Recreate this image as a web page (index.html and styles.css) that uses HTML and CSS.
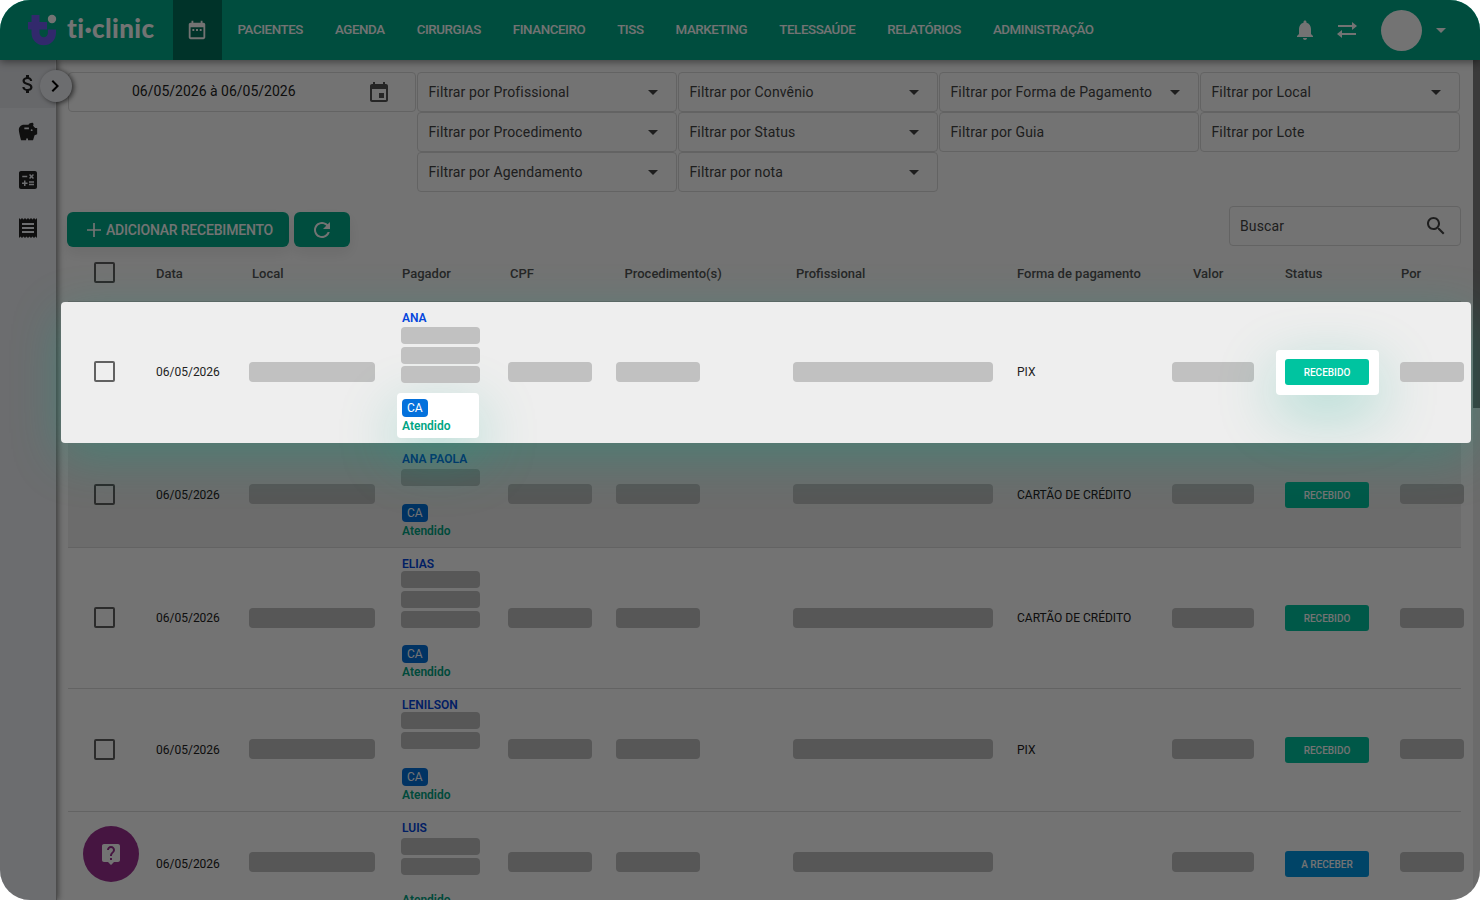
FILE: index.html
```
<!DOCTYPE html>
<html lang="pt-BR">
<head>
    <meta charset="UTF-8">
    <meta name="viewport" content="width=device-width, initial-scale=1.0">
    <title>ti-clinic - Recebimentos</title>
    <link rel="stylesheet" href="styles.css">
</head>
<body>
    <div class="app">
        <header class="topbar">
            <div class="logo">
                <svg class="logo-mark" viewBox="0 0 30 32">
                    <path fill="#6f5bf0" d="M4.500 1h8v7H20v7.500h-7.500V19a4.200 4.200 0 0 0 8.400 0v-3.500H29V19a12.250 12.250 0 0 1-24.500 0v-3.500H1V8h3.500z"/>
                    <circle cx="25" cy="5" r="4.200" fill="#fff"/>
                </svg>
                <span class="logo-text">ti·clinic</span>
            </div>
            <a class="nav-icon active">
                <svg class="icon-22" viewBox="0 0 24 24"><path d="M9 11H7v2h2v-2zm4 0h-2v2h2v-2zm4 0h-2v2h2v-2zm2-7h-1V2h-2v2H8V2H6v2H5c-1.110 0-1.990.9-1.990 2L3 20c0 1.100.89 2 2 2h14c1.100 0 2-.9 2-2V6c0-1.100-.9-2-2-2zm0 16H5V9h14v11z"/></svg>
            </a>
            <nav class="menu">
                <a>PACIENTES</a>
                <a>AGENDA</a>
                <a>CIRURGIAS</a>
                <a>FINANCEIRO</a>
                <a>TISS</a>
                <a>MARKETING</a>
                <a>TELESSAÚDE</a>
                <a>RELATÓRIOS</a>
                <a>ADMINISTRAÇÃO</a>
            </nav>
            <div class="user-area">
                <svg class="icon" viewBox="0 0 24 24"><path d="M12 22c1.100 0 2-.9 2-2h-4c0 1.100.89 2 2 2zm6-6v-5c0-3.070-1.640-5.640-4.500-6.320V4c0-.83-.67-1.500-1.500-1.500s-1.500.67-1.500 1.500v.68C7.630 5.360 6 7.920 6 11v5l-2 2v1h16v-1l-2-2z"/></svg>
                <svg class="swap" viewBox="0 0 20 16"><path d="M1 3h14V0l5 4-5 4V5H1zM19 11H5V8l-5 4 5 4v-3h14z"/></svg>
                <span class="avatar"></span>
                <span class="caret"></span>
            </div>
        </header>

        <div class="body">
            <aside class="sidebar">
                <a class="side-item active"><svg class="icon" viewBox="0 0 24 24"><path d="M11.800 10.900c-2.270-.59-3-1.200-3-2.150 0-1.090 1.010-1.850 2.700-1.850 1.780 0 2.440.85 2.500 2.100h2.210c-.07-1.720-1.120-3.300-3.210-3.810V3h-3v2.160c-1.940.42-3.500 1.680-3.500 3.610 0 2.310 1.910 3.460 4.700 4.130 2.500.6 3 1.480 3 2.410 0 .69-.49 1.790-2.700 1.790-2.060 0-2.870-.92-2.980-2.100h-2.200c.12 2.190 1.760 3.420 3.680 3.830V21h3v-2.150c1.950-.37 3.500-1.500 3.500-3.550 0-2.840-2.430-3.810-4.700-4.400z"/></svg></a>
                <a class="side-item"><svg class="icon-22" viewBox="0 0 24 24"><path fill-rule="evenodd" d="M19.830 7.500l-2.270-2.270c.07-.42.18-.81.32-1.150.08-.18.12-.37.12-.58C18 2.670 17.330 2 16.500 2c-1.640 0-3.090.79-4 2h-5C4.460 4 2 6.460 2 9.500S4.500 21 4.500 21H10v-2h2v2h5.500l1.680-5.590 2.820-.94V7.500h-2.170zM13 9H8V7h5v2zm3 2a1 1 0 1 1 0-2 1 1 0 0 1 0 2z"/></svg></a>
                <a class="side-item"><svg class="icon-24" viewBox="0 0 24 24"><path d="M19 3H5c-1.100 0-2 .9-2 2v14c0 1.100.9 2 2 2h14c1.100 0 2-.9 2-2V5c0-1.100-.9-2-2-2zm-5.970 4.060L14.090 6l1.410 1.410L16.910 6l1.060 1.060-1.410 1.410 1.410 1.410-1.060 1.060-1.410-1.400-1.410 1.410-1.060-1.060 1.410-1.410-1.410-1.420zM6.250 7.720h5v1.500h-5v-1.500zM11.500 16h-2v2H8v-2H6v-1.500h2v-2h1.500v2h2V16zm6.500 1.250h-5v-1.500h5v1.500zm0-2.500h-5v-1.500h5v1.500z"/></svg></a>
                <a class="side-item"><svg class="icon-24" viewBox="0 0 24 24"><path d="M18 17H6v-2h12v2zm0-4H6v-2h12v2zm0-4H6V7h12v2zM3 22l1.500-1.500L6 22l1.500-1.500L9 22l1.500-1.500L12 22l1.500-1.500L15 22l1.500-1.500L18 22l1.500-1.500L21 22V2l-1.500 1.500L18 2l-1.500 1.500L15 2l-1.500 1.500L12 2l-1.500 1.500L9 2 7.500 3.500 6 2 4.500 3.500 3 2v20z"/></svg></a>
                <button class="side-toggle"><svg class="icon-24" viewBox="0 0 24 24"><path d="M10 6L8.590 7.410 13.170 12l-4.580 4.590L10 18l6-6z"/></svg></button>
            </aside>

            <main class="content">
                <div class="filters">
                    <div class="field date-field">
                        <span>06/05/2026 à 06/05/2026</span>
                        <svg class="icon" viewBox="0 0 24 24"><path d="M17 12h-5v5h5v-5zM16 1v2H8V1H6v2H5c-1.110 0-1.990.9-1.990 2L3 19c0 1.100.89 2 2 2h14c1.100 0 2-.9 2-2V5c0-1.100-.9-2-2-2h-1V1h-2zm3 18H5V8h14v11z"/></svg>
                    </div>
                    <div class="field">Filtrar por Profissional<span class="caret"></span></div>
                    <div class="field">Filtrar por Convênio<span class="caret"></span></div>
                    <div class="field">Filtrar por Forma de Pagamento<span class="caret"></span></div>
                    <div class="field">Filtrar por Local<span class="caret"></span></div>
                    <div class="field second-line">Filtrar por Procedimento<span class="caret"></span></div>
                    <div class="field">Filtrar por Status<span class="caret"></span></div>
                    <div class="field">Filtrar por Guia</div>
                    <div class="field">Filtrar por Lote</div>
                    <div class="field second-line">Filtrar por Agendamento<span class="caret"></span></div>
                    <div class="field">Filtrar por nota<span class="caret"></span></div>
                </div>

                <div class="toolbar">
                    <button class="btn btn-add">
                        <svg class="icon" viewBox="0 0 24 24"><path d="M19 12.850h-6.150V19h-1.700v-6.150H5v-1.700h6.150V5h1.700v6.150H19z"/></svg>
                        ADICIONAR RECEBIMENTO
                    </button>
                    <button class="btn btn-refresh">
                        <svg class="icon" viewBox="0 0 24 24"><path d="M17.650 6.350C16.200 4.900 14.210 4 12 4c-4.420 0-7.990 3.580-7.990 8s3.570 8 7.990 8c3.730 0 6.840-2.550 7.730-6h-2.080c-.82 2.330-3.040 4-5.650 4-3.310 0-6-2.690-6-6s2.690-6 6-6c1.660 0 3.140.69 4.220 1.780L13 11h7V4l-2.350 2.350z"/></svg>
                    </button>
                    <div class="field search">
                        Buscar
                        <svg class="icon" viewBox="0 0 24 24"><path d="M15.500 14h-.79l-.28-.27C15.410 12.590 16 11.110 16 9.500 16 5.910 13.090 3 9.500 3S3 5.910 3 9.500 5.910 16 9.500 16c1.610 0 3.090-.59 4.230-1.570l.27.28v.79l5 4.990L20.490 19l-4.990-5zm-6 0C7.010 14 5 11.990 5 9.500S7.010 5 9.500 5 14 7.010 14 9.500 11.990 14 9.500 14z"/></svg>
                    </div>
                </div>

                <div class="table">
                    <div class="row head">
                        <div><span class="checkbox"></span></div>
                        <div>Data</div>
                        <div class="th-local">Local</div>
                        <div class="th-pagador">Pagador</div>
                        <div class="th-cpf">CPF</div>
                        <div class="th-proc">Procedimento(s)</div>
                        <div class="th-prof">Profissional</div>
                        <div>Forma de pagamento</div>
                        <div class="th-valor">Valor</div>
                        <div>Status</div>
                        <div class="th-por">Por</div>
                    </div>

                    <div class="row spotlight">
                        <div><span class="checkbox"></span></div>
                        <div>06/05/2026</div>
                        <div><span class="mask mask-local"></span></div>
                        <div class="payer">
                            <a class="name">ANA</a>
                            <div class="masks lines-4 tight"><span></span><span></span><span></span></div>
                            <div class="payer-status focus-box">
                                <div class="tag-line"><span class="tag">CA</span></div>
                                <div class="attended">Atendido</div>
                            </div>
                        </div>
                        <div><span class="mask mask-cpf"></span></div>
                        <div><span class="mask mask-cpf"></span></div>
                        <div><span class="mask mask-prof"></span></div>
                        <div>PIX</div>
                        <div><span class="mask mask-valor"></span></div>
                        <div><div class="focus-box status-focus"><span class="status">RECEBIDO</span></div></div>
                        <div><span class="mask mask-por"></span></div>
                    </div>

                    <div class="row hovered">
                        <div><span class="checkbox"></span></div>
                        <div>06/05/2026</div>
                        <div><span class="mask mask-local"></span></div>
                        <div class="payer">
                            <a class="name">ANA PAOLA</a>
                            <div class="masks lines-2 lower"><span></span></div>
                            <div class="tag-line"><span class="tag">CA</span></div>
                            <div class="attended">Atendido</div>
                        </div>
                        <div><span class="mask mask-cpf"></span></div>
                        <div><span class="mask mask-cpf"></span></div>
                        <div><span class="mask mask-prof"></span></div>
                        <div>CARTÃO DE CRÉDITO</div>
                        <div><span class="mask mask-valor"></span></div>
                        <div><span class="status">RECEBIDO</span></div>
                        <div><span class="mask mask-por"></span></div>
                    </div>

                    <div class="row">
                        <div><span class="checkbox"></span></div>
                        <div>06/05/2026</div>
                        <div><span class="mask mask-local"></span></div>
                        <div class="payer">
                            <a class="name">ELIAS</a>
                            <div class="masks lines-4 upper"><span></span><span></span><span></span></div>
                            <div class="tag-line"><span class="tag">CA</span></div>
                            <div class="attended">Atendido</div>
                        </div>
                        <div><span class="mask mask-cpf"></span></div>
                        <div><span class="mask mask-cpf"></span></div>
                        <div><span class="mask mask-prof"></span></div>
                        <div>CARTÃO DE CRÉDITO</div>
                        <div><span class="mask mask-valor"></span></div>
                        <div><span class="status">RECEBIDO</span></div>
                        <div><span class="mask mask-por"></span></div>
                    </div>

                    <div class="row raised">
                        <div><span class="checkbox"></span></div>
                        <div>06/05/2026</div>
                        <div><span class="mask mask-local"></span></div>
                        <div class="payer">
                            <a class="name">LENILSON</a>
                            <div class="masks lines-3 upper"><span></span><span></span></div>
                            <div class="tag-line"><span class="tag">CA</span></div>
                            <div class="attended">Atendido</div>
                        </div>
                        <div><span class="mask mask-cpf"></span></div>
                        <div><span class="mask mask-cpf"></span></div>
                        <div><span class="mask mask-prof"></span></div>
                        <div>PIX</div>
                        <div><span class="mask mask-valor"></span></div>
                        <div><span class="status">RECEBIDO</span></div>
                        <div><span class="mask mask-por"></span></div>
                    </div>

                    <div class="row raised-more">
                        <div></div>
                        <div>06/05/2026</div>
                        <div><span class="mask mask-local"></span></div>
                        <div class="payer">
                            <a class="name">LUIS</a>
                            <div class="masks lines-3 lower"><span></span><span></span></div>
                            <div class="attended">Atendido</div>
                        </div>
                        <div><span class="mask mask-cpf"></span></div>
                        <div><span class="mask mask-cpf"></span></div>
                        <div><span class="mask mask-prof"></span></div>
                        <div></div>
                        <div><span class="mask mask-valor"></span></div>
                        <div><span class="status pending">A RECEBER</span></div>
                        <div><span class="mask mask-por"></span></div>
                    </div>
                </div>
            </main>

            <div class="scrollbar"><div class="thumb"></div></div>
        </div>

        <button class="help-button">
            <svg class="icon" viewBox="0 0 24 24"><path d="M19 2H5c-1.110 0-2 .9-2 2v14c0 1.100.89 2 2 2h4l3 3 3-3h4c1.100 0 2-.9 2-2V4c0-1.100-.9-2-2-2zm-6 16h-2v-2h2v2zm2.070-7.750l-.9.920C13.450 11.900 13 12.500 13 14h-2v-.5c0-1.100.45-2.100 1.170-2.830l1.240-1.260c.37-.36.59-.86.59-1.410 0-1.100-.9-2-2-2s-2 .9-2 2H8c0-2.210 1.790-4 4-4s4 1.790 4 4c0 .88-.36 1.680-.93 2.250z"/></svg>
        </button>
        <div class="backdrop"></div>
    </div>
</body>
</html>
```
FILE: styles.css
```
* {
    box-sizing: border-box;
}
body {
    margin: 0;
    background: #fff;
    font-family: Roboto, "Liberation Sans", sans-serif;
    font-size: 14px;
    color: #222;
}
button {
    border: none;
    padding: 0;
    font-family: inherit;
}
svg {
    display: block;
    fill: currentColor;
    flex: none;
}
.icon, .icon-24 {
    width: 24px;
    height: 24px;
}
.icon-22 {
    width: 22px;
    height: 22px;
}
.caret {
    border: 5px solid transparent;
    border-top-color: currentColor;
    border-bottom: none;
}

.app {
    position: relative;
    width: 1480px;
    height: 900px;
    overflow: hidden;
    border-radius: 30px;
    background: #fff;
    display: flex;
    flex-direction: column;
}
.backdrop {
    position: absolute;
    inset: 0;
    z-index: 10;
    background: rgba(0, 0, 0, 0.55);
}

/* top bar */
.topbar {
    position: relative;
    z-index: 3;
    flex: none;
    height: 60px;
    display: flex;
    align-items: center;
    background: #00ab8a;
    color: #fff;
    box-shadow: 0 2px 8px rgba(0, 0, 0, 0.45);
}
.logo {
    width: 172px;
    padding-left: 27px;
    display: flex;
    align-items: center;
}
.logo-mark {
    width: 30px;
    height: 32px;
}
.logo-text {
    margin-left: 10px;
    padding-bottom: 4px;
    font-family: Lato, sans-serif;
    font-weight: 900;
    font-size: 26px;
    line-height: 32px;
    letter-spacing: 0.4px;
    white-space: nowrap;
}
.nav-icon {
    width: 49px;
    height: 60px;
    margin-left: 0.5px;
    display: flex;
    align-items: center;
    justify-content: center;
}
.nav-icon.active {
    background: #00715b;
}
.menu {
    display: flex;
    gap: 32px;
    margin-left: 16px;
    padding-bottom: 2px;
    font-size: 13.3px;
    font-weight: 500;
    letter-spacing: -0.4px;
}
.user-area {
    margin-left: auto;
    margin-right: 34px;
    display: flex;
    align-items: center;
}
.swap {
    width: 20px;
    height: 16px;
    margin-left: 20px;
}
.avatar {
    width: 41px;
    height: 41px;
    margin: 1px 14px 0 24px;
    border-radius: 50%;
    background: #fff;
}

/* layout */
.body {
    flex: 1;
    min-height: 0;
    display: flex;
}
.sidebar {
    position: relative;
    z-index: 2;
    flex: none;
    width: 57px;
    padding-right: 1px;
    background: #f0f2f7;
    border-right: 1px solid #aaa;
    box-shadow: 1px 0 6px rgba(0, 0, 0, 0.5);
    color: #222;
}
.side-item {
    height: 48px;
    display: flex;
    align-items: center;
    justify-content: center;
}
.side-item.active {
    background: #e4e6eb;
}
.side-toggle {
    position: absolute;
    top: 10px;
    left: 40px;
    width: 32px;
    height: 32px;
    padding-left: 3px;
    border-radius: 50%;
    background: #f0f2f7;
    box-shadow: 2px 1px 5px rgba(0, 0, 0, 0.6);
    color: #000;
}
.content {
    flex: 1;
    padding: 12px 12px 0 11px;
}
.scrollbar {
    width: 7px;
    background: #eee;
}
.thumb {
    height: 348px;
    background: #808080;
}

/* filters */
.filters {
    display: grid;
    grid-template-columns: 348px repeat(4, 260px);
    column-gap: 1px;
}
.field {
    height: 40px;
    border: 1px solid #dcdcdc;
    border-radius: 4px;
    padding: 0 18px 0 10.5px;
    display: flex;
    align-items: center;
    justify-content: space-between;
    letter-spacing: 0.13px;
    color: #444;
}
.second-line {
    grid-column: 2;
}
.date-field {
    padding: 0 24px 2px 63px;
    letter-spacing: 0;
    color: #222;
}
.date-field .icon {
    margin-top: 4px;
    color: #555;
}

/* actions above the table */
.toolbar {
    display: flex;
    height: 55px;
    padding-top: 14px;
}
.btn {
    height: 35px;
    margin-top: 6px;
    display: flex;
    align-items: center;
    justify-content: center;
    border-radius: 6px;
    background: #00ab8a;
    box-shadow: 0 6px 14px rgba(0, 0, 0, 0.08);
    color: #fff;
    font-size: 14px;
    font-weight: 500;
    letter-spacing: -0.2px;
}
.btn-add {
    width: 222px;
    margin-left: -1.5px;
}
.btn-refresh {
    width: 56px;
    margin-left: 5px;
}
.search {
    width: 232px;
    margin-left: auto;
    margin-right: 0.5px;
    padding-right: 12px;
}

/* table */
.row {
    display: grid;
    grid-template-columns: 62px 93px 152px 107px 108px 177px 224px 155px 113px 115px 61px;
    align-items: center;
    padding: 7px 0 7px 26px;
    border-bottom: 1px solid #dcdcdc;
    font-size: 12px;
    white-space: nowrap;
}
.head {
    height: 55px;
    padding-bottom: 9px;
    font-size: 13px;
    font-weight: 500;
    color: #555;
}
.th-local,
.th-prof {
    padding-left: 3px;
}
.th-pagador,
.th-por {
    padding-left: 1px;
}
.th-cpf {
    padding-left: 2px;
}
.th-proc {
    padding-left: 8.5px;
}
.th-valor {
    padding-left: 21px;
}
.hovered {
    background: #f0f0f0;
}
.spotlight {
    position: relative;
    z-index: 20;
    margin: 0 -10px 0 -7px;
    padding-left: 33px;
    border-bottom-color: transparent;
    border-radius: 4px;
    background: #eee;
    box-shadow: 0 14px 50px rgba(0, 171, 138, 0.3);
}
.checkbox {
    display: block;
    width: 21px;
    height: 21px;
    margin-bottom: 1px;
    border: 2px solid #616161;
    border-radius: 2px;
}
.mask {
    display: block;
    height: 20px;
    border-radius: 4px;
    background: #c1c1c1;
}
.mask-local {
    width: 126px;
}
.mask-cpf {
    width: 84px;
}
.mask-prof {
    width: 200px;
}
.mask-valor {
    width: 82px;
}
.mask-por {
    width: 64px;
}
.hovered .mask,
.raised .mask {
    margin-bottom: 2px;
}
.raised-more .mask {
    margin-bottom: 4px;
}

/* payer column */
.payer {
    padding-left: 1px;
    line-height: 18px;
}
.name {
    display: block;
    height: 18px;
    color: #0445dd;
    font-weight: 600;
}
.masks {
    display: flex;
    flex-direction: column;
    gap: 3px;
    margin-left: -1px;
}
.masks span {
    width: 79px;
    height: 17px;
    border-radius: 4px;
    background: #c1c1c1;
}
.masks.tight span:last-child {
    margin-top: -1px;
}
.masks.upper span:first-child {
    margin-top: -2px;
}
.masks.lower span:first-child {
    margin-top: 1px;
}
.lines-2 {
    height: 36px;
}
.lines-3 {
    height: 54px;
}
.lines-4 {
    height: 72px;
}
.tag-line {
    height: 18px;
}
.tag {
    display: block;
    width: 25.5px;
    height: 18px;
    border-radius: 4px;
    background: #0471dc;
    color: #fff;
    text-align: center;
}
.attended {
    height: 18px;
    color: #00a583;
    font-weight: 600;
}
.status {
    display: block;
    width: 84px;
    height: 26px;
    border-radius: 3px;
    background: #00c4a0;
    color: #fff;
    font-size: 10px;
    font-weight: 500;
    line-height: 27px;
    text-align: center;
}
.status.pending {
    background: #0098e5;
}
.focus-box {
    border-radius: 4px;
    background: #fff;
    box-shadow: 0 18px 60px rgba(0, 171, 138, 0.3);
}
.payer-status {
    width: 82px;
    margin: -6px 0 -3px -5px;
    padding: 6px 5px 3px;
}
.status-focus {
    width: 103px;
    margin-left: -9px;
    padding: 9px 9px 10px;
}

.help-button {
    position: absolute;
    left: 83px;
    top: 826px;
    width: 56px;
    height: 56px;
    display: flex;
    align-items: center;
    justify-content: center;
    border-radius: 50%;
    background: #9b3090;
    color: #fff;
}
```
